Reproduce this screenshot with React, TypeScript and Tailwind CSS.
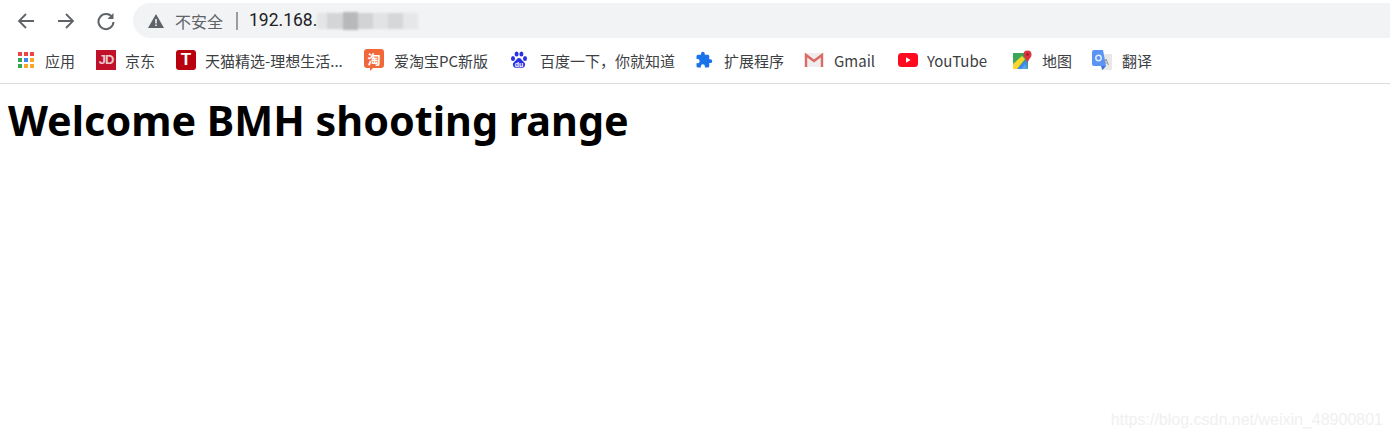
const cjk = 'font-["Noto_Sans_CJK_SC","Noto_Sans",sans-serif]'

function AppsIcon() {
  const colors = ['#ef4444', '#ef4444', '#ef4444', '#34a853', '#4285f4', '#f9a825', '#34a853', '#f9a825', '#f9a825']
  return (
    <div className="grid w-4 h-4 grid-cols-3 gap-[2px]">
      {colors.map((c, i) => (
        <div key={i} className="w-[4px] h-[4px]" style={{ backgroundColor: c }} />
      ))}
    </div>
  )
}

function JdIcon() {
  return (
    <div className="w-5 h-5 bg-[#c0102a] flex items-center justify-center text-[13px] font-bold text-[#e8c8c8] font-['Liberation_Sans',sans-serif] tracking-[-1px]">
      JD
    </div>
  )
}

function TmallIcon() {
  return (
    <div className="w-5 h-5 rounded-[3px] bg-[#b8000f] flex items-center justify-center text-[17px] font-bold text-white font-['Liberation_Sans',sans-serif]">
      T
    </div>
  )
}

function TaoIcon() {
  return (
    <svg width="20" height="22" viewBox="0 0 20 22">
      <path d="M3 0h14a3 3 0 0 1 3 3v13a3 3 0 0 1-3 3H9l-3 3v-3H3a3 3 0 0 1-3-3V3a3 3 0 0 1 3-3z" fill="#f0673a" />
      <text x="10" y="14.500" textAnchor="middle" fontSize="13" fontWeight="700" fill="#fff" fontFamily="Noto Sans CJK SC, sans-serif">淘</text>
    </svg>
  )
}

function BaiduIcon() {
  return (
    <svg width="18" height="18" viewBox="0 0 18 18" fill="#2932e1">
      <ellipse cx="3" cy="7.5" rx="2" ry="2.6" />
      <ellipse cx="6.6" cy="3" rx="2" ry="2.6" />
      <ellipse cx="11.4" cy="3" rx="2" ry="2.6" />
      <ellipse cx="15" cy="7.5" rx="2" ry="2.6" />
      <path d="M9 7c2 0 2.600 2 4 3.200 1.600 1.300 2.400 2.200 2 4-.4 2-2.200 2.800-3.600 2.600-1-.1-1.700-.4-2.400-.4s-1.400.3-2.400.4C5.200 17 3.400 16.200 3 14.200c-.4-1.800.4-2.700 2-4C6.400 9 7 7 9 7z" />
      <text x="9" y="15.500" textAnchor="middle" fontSize="7" fontWeight="700" fill="#fff" fontFamily="Liberation Sans, sans-serif">du</text>
    </svg>
  )
}

function PuzzleIcon() {
  return (
    <svg width="18" height="18" viewBox="0 0 24 24" fill="#1a73e8">
      <path d="M20.5 11H19V7a2 2 0 0 0-2-2h-4V3.5a2.5 2.5 0 0 0-5 0V5H4a2 2 0 0 0-2 2v3.800h1.500a2.700 2.700 0 0 1 0 5.400H2V20a2 2 0 0 0 2 2h3.800v-1.500a2.700 2.700 0 0 1 5.400 0V22H17a2 2 0 0 0 2-2v-4h1.500a2.500 2.500 0 0 0 0-5z" />
    </svg>
  )
}

function GmailIcon() {
  return (
    <svg width="20" height="16" viewBox="0 0 20 16">
      <path d="M1 1h18v14H1z" fill="#efeded" />
      <path d="M2 15V3l8 6 8-6v12" fill="none" stroke="#dc6a64" strokeWidth="2.4" />
    </svg>
  )
}

function YoutubeIcon() {
  return (
    <svg width="20" height="14" viewBox="0 0 20 14">
      <rect width="20" height="14" rx="3.5" fill="#ff0a20" />
      <path d="M8 4.200v5.600L12.600 7z" fill="#fff" />
    </svg>
  )
}

function MapsIcon() {
  return (
    <svg width="20" height="20" viewBox="0 0 20 20">
      <path d="M1 3h15v16H1z" fill="#3aa757" />
      <path d="M5 19L15 9v10z" fill="#4285f4" />
      <path d="M1 14L10 6l3 3-8 10H1z" fill="#fbd52e" />
      <path d="M9 19l4-5 3 5z" fill="#5aa0ea" />
      <circle cx="15.500" cy="4.500" r="4" fill="#d9363e" />
      <path d="M12.500 7l3 5.500 3-5.500z" fill="#d9363e" />
      <circle cx="15.500" cy="4.500" r="1.300" fill="#8f1c22" />
    </svg>
  )
}

function TranslateIcon() {
  return (
    <svg width="20" height="20" viewBox="0 0 20 20">
      <path d="M8 4h12v15a1 1 0 0 1-1 1H9z" fill="#e8e8e8" />
      <path d="M14 9l-2.500 6M14 9l2.500 6M12 13h4" stroke="#9a9a9a" strokeWidth="1" fill="none" />
      <path d="M2 0h9l3 16H2a2 2 0 0 1-2-2V2a2 2 0 0 1 2-2z" fill="#5a95f5" />
      <circle cx="6.500" cy="8" r="2.700" fill="none" stroke="#e8f0ff" strokeWidth="1.400" />
      <path d="M9 16l1.500 4 3.500-4z" fill="#3f6fd8" />
    </svg>
  )
}

const bookmarks = [
  { icon: <AppsIcon />, label: '应用', w: 'w-[80px]', gap: 'gap-[9px]' },
  { icon: <JdIcon />, label: '京东', w: 'w-[80px]', gap: 'gap-[9px]' },
  { icon: <TmallIcon />, label: '天猫精选-理想生活...', w: 'w-[188px]', gap: 'gap-[9px]' },
  { icon: <TaoIcon />, label: '爱淘宝PC新版', w: 'w-[145px]', gap: 'gap-[10px]' },
  { icon: <BaiduIcon />, label: '百度一下，你就知道', w: 'w-[185px]', gap: 'gap-[11px]' },
  { icon: <PuzzleIcon />, label: '扩展程序', w: 'w-[110px]', gap: 'gap-[10px]' },
  { icon: <GmailIcon />, label: 'Gmail', w: 'w-[94px]', gap: 'gap-[10px]' },
  { icon: <YoutubeIcon />, label: 'YouTube', w: 'w-[114px]', gap: 'gap-[9px]' },
  { icon: <MapsIcon />, label: '地图', w: 'w-[80px]', gap: 'gap-[10px]' },
  { icon: <TranslateIcon />, label: '翻译', w: 'w-[80px]', gap: 'gap-[10px]' },
]

export default function App() {
  return (
    <div className="relative min-h-[438px] bg-white overflow-hidden">
      {/* Browser toolbar */}
      <div className="flex items-center h-[40px] pt-[1px]">
        <div className="flex items-center pl-[16px] gap-[20px] text-[#5f6368]">
          <svg width="20" height="20" viewBox="0 0 20 20" fill="none" stroke="currentColor" strokeWidth="1.800">
            <path d="M18 10H3M10 3l-7 7 7 7" />
          </svg>
          <svg width="20" height="20" viewBox="0 0 20 20" fill="none" stroke="currentColor" strokeWidth="1.800">
            <path d="M2 10h15M10 3l7 7-7 7" />
          </svg>
          <svg width="20" height="20" viewBox="0 0 20 20" fill="none" stroke="currentColor" strokeWidth="2">
            <path d="M16.300 6.500A7.500 7.500 0 1 0 17.500 11" />
            <path d="M17.500 2v6h-6z" fill="currentColor" stroke="none" />
          </svg>
        </div>
        <div className="ml-[17px] flex-1 h-[35px] rounded-l-[18px] bg-[#f1f3f4] flex items-center pl-[15px]">
          <svg width="16" height="14" viewBox="0 0 16 14">
            <path d="M8 0l8 14H0z" fill="#5f6368" />
            <path d="M7.200 5h1.600v4.500H7.200zM7.200 10.500h1.600V12H7.200z" fill="#f1f3f4" />
          </svg>
          <span className={`ml-[11px] text-[16px] text-[#5f6368] ${cjk}`}>不安全</span>
          <div className="ml-[13px] w-[2px] h-[18px] bg-[#9a9da0]" />
          <span className="ml-[11px] text-[17.500px] text-[#202124] font-['Roboto',sans-serif]">192.168.</span>
          <div className="flex items-center h-[22px] blur-[1px]">
            <div className="w-[10px] h-[16px] bg-[#e4e5e6]" />
            <div className="w-[16px] h-[16px] bg-[#d4d5d6]" />
            <div className="w-[15px] h-[18px] bg-[#b8b9ba]" />
            <div className="w-[15px] h-[16px] bg-[#d2d3d4]" />
            <div className="w-[15px] h-[16px] bg-[#e2e3e4]" />
            <div className="w-[15px] h-[16px] bg-[#d6d7d8]" />
            <div className="w-[15px] h-[16px] bg-[#e6e7e8]" />
          </div>
        </div>
      </div>

      {/* Bookmarks bar */}
      <div className="flex items-center h-[44px] pl-[16px] pb-[3px] border-b border-[#dadce0]">
        {bookmarks.map((b) => (
          <div key={b.label} className={`flex items-center shrink-0 ${b.w} ${b.gap}`}>
            <div className="flex justify-center items-center w-5">{b.icon}</div>
            <span className={`text-[15px] leading-none text-[#3c4043] whitespace-nowrap ${cjk}`}>{b.label}</span>
          </div>
        ))}
      </div>

      {/* Page body */}
      <h1 className="ml-[8px] mt-[8px] text-[41.300px] leading-[57px] font-bold text-black font-['Noto_Sans',sans-serif]">
        Welcome BMH shooting range
      </h1>

      {/* Watermark */}
      <span className="absolute right-[7px] bottom-[6px] text-[16px] text-[#f0f0f0] font-['Liberation_Sans',sans-serif]">
        https://blog.csdn.net/weixin_48900801
      </span>
    </div>
  )
}
